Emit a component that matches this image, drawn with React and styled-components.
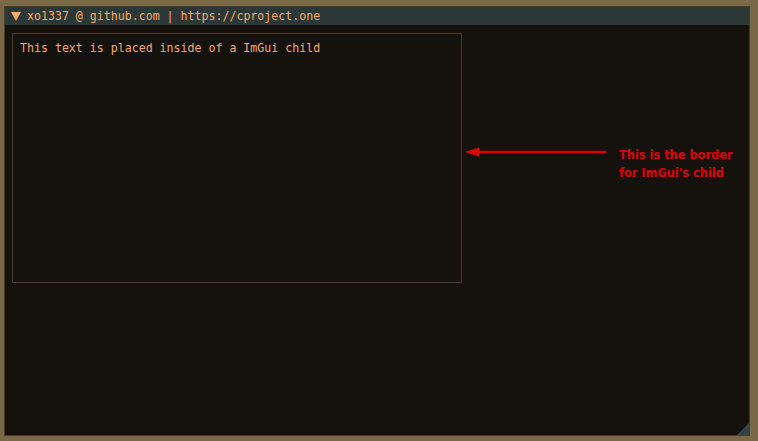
import React from 'react'
import styled, { createGlobalStyle } from 'styled-components'

const Global = createGlobalStyle`
html, body {
  margin:0;
  padding:0;
  background:#7a6947;
  width:758px;
  height:441px;
  overflow:hidden;
}
`

const Page = styled.div`
width:758px;
height:441px;
box-sizing:border-box;
padding:6px 8px 5px 4px;
display:flex;
`

const Window = styled.div`
flex:1;
display:flex;
flex-direction:column;
background:#15110c;
border:1px solid #4a3b28;
position:relative;
font-family:"DejaVu Sans Mono", "Liberation Mono", monospace;
font-size:11.6px;
color:#f7aa62;
`

const TitleBar = styled.div`
height:18px;
background:#2c3838;
display:flex;
align-items:center;
gap:6px;
padding-left:6px;
`

const Arrow = styled.span`
width:0;
height:0;
border-left:5px solid transparent;
border-right:5px solid transparent;
border-top:9px solid #f7aa62;
margin-top:1px;
`

const Body = styled.div`
flex:1;
display:flex;
align-items:flex-start;
padding:8px 7px;
`

const Child = styled.div`
width:450px;
height:250px;
flex-shrink:0;
border:1px solid #4b3a2a;
box-sizing:border-box;
padding:7px 7px;
`

const Note = styled.div`
display:flex;
align-items:flex-start;
margin-top:114px;
margin-left:3px;
`

const Label = styled.div`
font-family:"DejaVu Sans", Verdana, sans-serif;
font-weight:bold;
font-size:11.4px;
line-height:18px;
white-space:nowrap;
color:#e00000;
margin-left:12px;
margin-top:-1px;
`

const Grip = styled.div`
position:absolute;
right:0;
bottom:0;
width:0;
height:0;
border-left:12px solid transparent;
border-bottom:12px solid #34434a;
`

const App = () => {
  return (
    <Page>
      <Global/>
      <Window>
        <TitleBar>
          <Arrow/>
          <span>xo1337 @ github.com | https://cproject.one</span>
        </TitleBar>
        <Body>
          <Child>This text is placed inside of a ImGui child</Child>
          <Note>
            <svg width="142" height="10" viewBox="0 0 142 10">
              <polygon points="0,5 14,0.5 14,3.8 141,3.8 141,6.2 14,6.2 14,9.5" fill="#e00000"/>
            </svg>
            <Label>This is the border<br/>for ImGui's child</Label>
          </Note>
        </Body>
        <Grip/>
      </Window>
    </Page>
  )
}

export default App
